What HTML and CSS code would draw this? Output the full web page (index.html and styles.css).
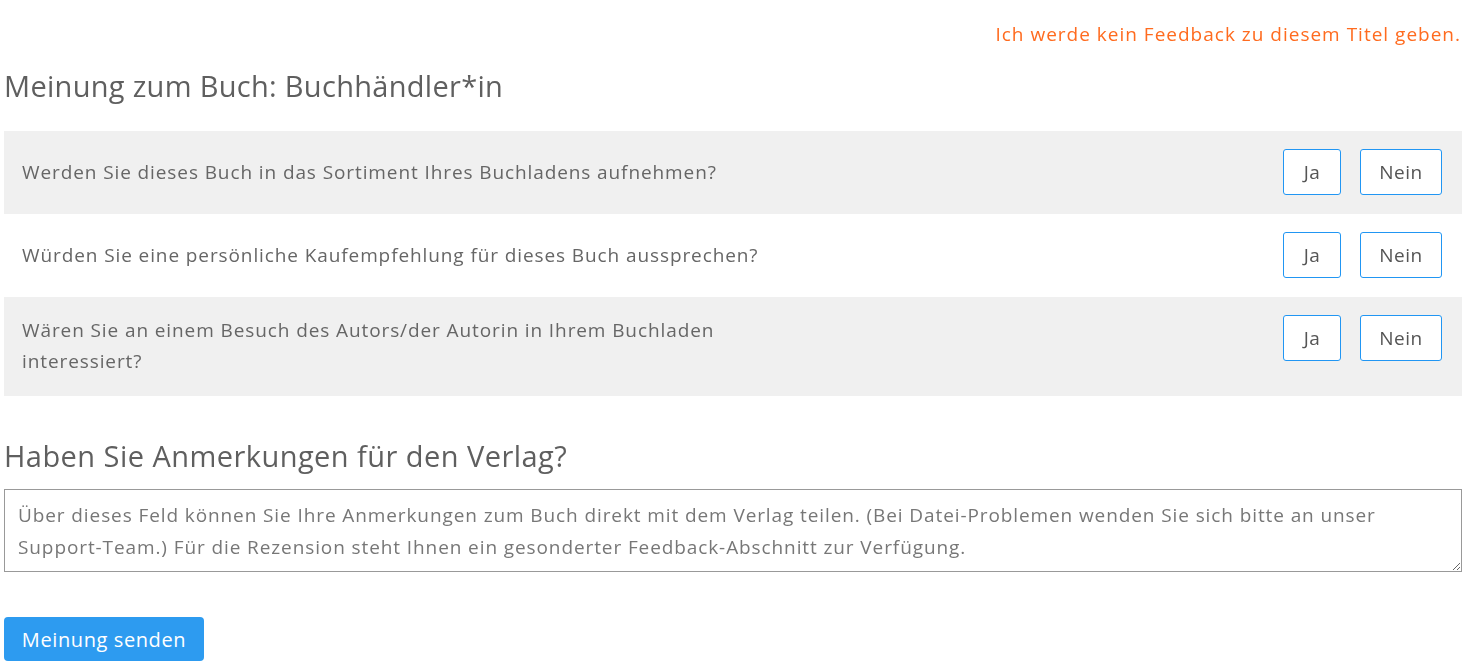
FILE: index.html
```html
<!DOCTYPE html>
<html lang="de">
<head>
<meta charset="utf-8">
<title>Meinung zum Buch</title>
<link rel="stylesheet" href="styles.css">
</head>
<body>
<main class="page">
  <div class="skip-row"><a class="skip-link" href="#">Ich werde kein Feedback zu diesem Titel geben.</a></div>
  <h2 class="title">Meinung zum Buch: Buchhändler*in</h2>
  <div class="questions">
    <div class="q-row alt">
      <div class="q-text">Werden Sie dieses Buch in das Sortiment Ihres Buchladens aufnehmen?</div>
      <div class="answers"><button class="ans ja">Ja</button><button class="ans nein">Nein</button></div>
    </div>
    <div class="q-row">
      <div class="q-text">Würden Sie eine persönliche Kaufempfehlung für dieses Buch aussprechen?</div>
      <div class="answers"><button class="ans ja">Ja</button><button class="ans nein">Nein</button></div>
    </div>
    <div class="q-row alt">
      <div class="q-text">Wären Sie an einem Besuch des Autors/der Autorin in Ihrem Buchladen interessiert?</div>
      <div class="answers"><button class="ans ja">Ja</button><button class="ans nein">Nein</button></div>
    </div>
  </div>
  <h2 class="subtitle">Haben Sie Anmerkungen für den Verlag?</h2>
  <textarea class="notes" placeholder="Über dieses Feld können Sie Ihre Anmerkungen zum Buch direkt mit dem Verlag teilen. (Bei Datei-Problemen wenden Sie sich bitte an unser Support-Team.) Für die Rezension steht Ihnen ein gesonderter Feedback-Abschnitt zur Verfügung."></textarea>
  <div class="submit-row"><button class="submit">Meinung senden</button></div>
</main>
</body>
</html>
```
FILE: styles.css
```css
html, body { margin: 0; padding: 0; background: #fff; }
body { font-family: "Open Sans", Lato, sans-serif; color: #666; }
.page { width: 1458px; margin-left: 4px; }
.skip-row { display: flex; justify-content: flex-end; padding-top: 22px; padding-right: 1px; }
.skip-link { color: #ff6b1f; text-decoration: none; font-size: 19px; line-height: 24px; letter-spacing: 1px; }
.title { margin: 20px 0 0; font-weight: 400; font-size: 29px; line-height: 40px; color: #5f5f5f; letter-spacing: 0.3px; }
.questions { margin-top: 25px; }
.q-row { display: flex; justify-content: space-between; align-items: flex-start; padding: 18px 20px 19px 18px; }
.q-row.alt { background: #f0f0f0; }
.q-text { max-width: 780px; min-height: 46px; display: flex; align-items: center; font-size: 19px; line-height: 31px; color: #666; letter-spacing: 0.9px; }
.answers { display: flex; gap: 19px; flex-shrink: 0; }
.ans { height: 46px; background: #fff; border: 1px solid #2196f3; border-radius: 3px; font-family: inherit; font-size: 19px; color: #555; padding: 0; cursor: pointer; letter-spacing: 0.5px; }
.ans.ja { width: 58px; }
.ans.nein { width: 82px; }
.subtitle { margin: 40px 0 0; font-weight: 400; font-size: 29px; line-height: 40px; color: #5f5f5f; letter-spacing: 0.45px; }
.notes { display: block; box-sizing: border-box; width: 1458px; height: 83px; margin-top: 13px; border: 1px solid #999; border-radius: 0; padding: 9px 13px; font-family: inherit; font-size: 19px; line-height: 32px; color: #666; letter-spacing: 0.9px; resize: vertical; }
.notes::placeholder { color: #777; opacity: 1; }
.submit-row { margin-top: 45px; }
.submit { height: 44px; width: 200px; background: #2d9bf0; color: #fff; border: none; border-radius: 4px; font-family: inherit; font-size: 20px; letter-spacing: 0.6px; cursor: pointer; }
```
